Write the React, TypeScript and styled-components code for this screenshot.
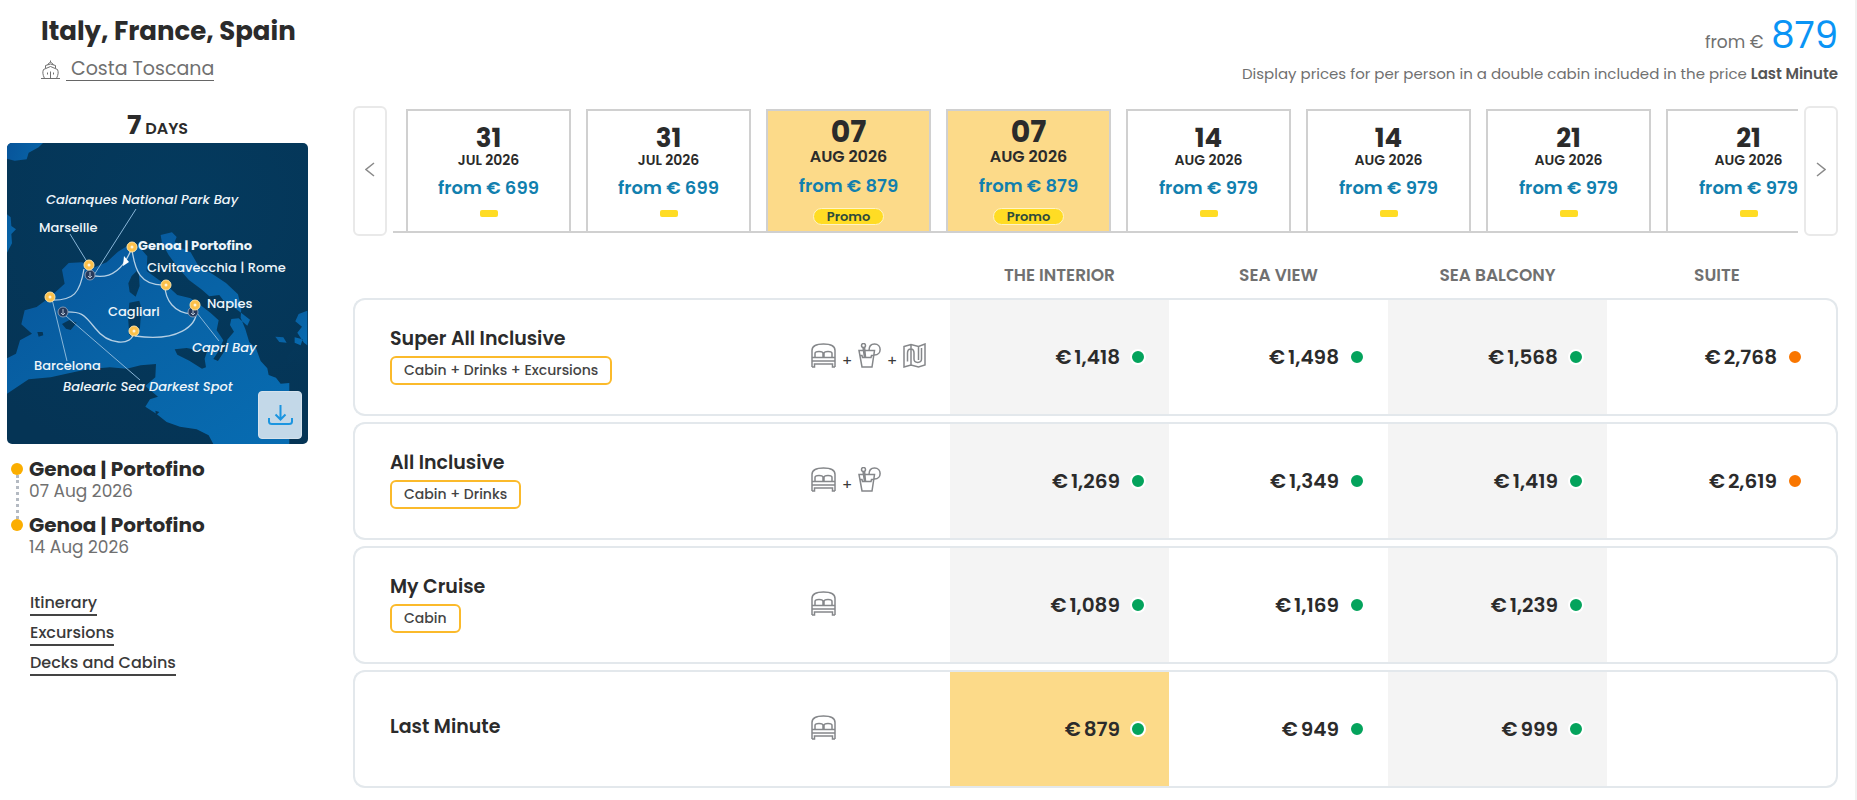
import React from 'react';
import styled, { createGlobalStyle } from 'styled-components';

const GlobalStyle = createGlobalStyle`
  * { box-sizing: border-box; }
  body { margin: 0; background: #fff; color: #2b2b2b; font-family: Poppins, Inter, "Open Sans", sans-serif; font-size: 16px; }
  h1, h2, p, ol, ul { margin: 0; padding: 0; }
  ol, ul { list-style: none; }
  button { font: inherit; color: inherit; cursor: pointer; }
`;

const Page = styled.main`
  min-height: 100vh;
  padding: 14px 17px 11px 7px;
  border-right: 2px solid #f1f1f1;
`;

const Header = styled.header`
  display: flex;
  justify-content: space-between;
  padding-left: 34px;
  height: 92px;
`;

const Title = styled.h1`
  font-size: 26px;
  line-height: 34px;
  font-weight: 700;
`;

const ShipLine = styled.p`
  display: flex;
  align-items: center;
  gap: 6px;
  margin-top: 10px;
  line-height: 26px;
  color: #666;
`;

const ShipLink = styled.a`
  padding-left: 5px;
  border-bottom: 1px solid #666;
  font-size: 19px;
  line-height: 22px;
  color: #707070;
  text-decoration: none;
`;

const PriceBlock = styled.div`
  text-align: right;
  color: #707070;
`;

const FromPrice = styled.p`
  font-size: 17px;
  line-height: 42px;
`;

const BigPrice = styled.span`
  margin-left: 3px;
  font-size: 37px;
  color: #0a94f5;
`;

const Note = styled.p`
  margin-top: 1px;
  font-size: 15px;
  line-height: 20px;
  strong { font-weight: 600; color: #555; }
`;

const Columns = styled.div`
  display: grid;
  grid-template-columns: 301px minmax(0, 1fr);
  column-gap: 45px;
`;

const Duration = styled.h2`
  font-size: 16px;
  line-height: 38px;
  height: 37px;
  font-weight: 600;
  text-align: center;
  span { font-size: 27px; font-weight: 700; }
`;

const MapBox = styled.div`
  position: relative;
  height: 301px;
  border-radius: 5px;
  overflow: hidden;
  svg { display: block; }
`;

const Download = styled.button`
  position: absolute;
  right: 6px;
  bottom: 5px;
  width: 44px;
  height: 48px;
  padding: 0 0 0 9px;
  border: 1px solid #d5e2ec;
  border-radius: 4px;
  background: #c3d8e8;
`;

const Stops = styled.ol`
  position: relative;
  margin: 12px 0 0 4px;
`;

const Stop = styled.li`
  position: relative;
  height: 56px;
  padding: 1px 0 0 18px;
  &::before {
    content: '';
    position: absolute;
    left: 0;
    top: 7px;
    width: 12px;
    height: 12px;
    border-radius: 50%;
    background: #fbae00;
  }
  &:first-child::after {
    content: '';
    position: absolute;
    left: 5px;
    top: 19px;
    height: 44px;
    border-left: 3px dotted #b4bac2;
  }
`;

const Port = styled.p`
  font-size: 20px;
  line-height: 24px;
  font-weight: 700;
`;

const PortDate = styled.p`
  font-size: 17px;
  line-height: 20px;
  color: #707070;
`;

const Links = styled.ul`
  display: flex;
  flex-direction: column;
  align-items: flex-start;
  gap: 6px;
  margin: 24px 0 0 23px;
`;

const TextLink = styled.a`
  display: block;
  border-bottom: 2px solid #444;
  font-size: 16px;
  line-height: 22px;
  font-weight: 500;
  color: #3a3a3a;
  text-decoration: none;
`;

const Dates = styled.div`
  display: flex;
  height: 130px;
`;

const Arrow = styled.button`
  flex: none;
  width: 34px;
  padding: 0 0 4px;
  border: 2px solid #e9e9e9;
  border-radius: 6px;
  background: #fff;
  color: #8a8a8a;
  svg { display: block; margin: auto; }
`;

const Track = styled.ul`
  flex: 1;
  display: flex;
  gap: 15px;
  margin: 3px 6px 3px 6px;
  padding-left: 13px;
  overflow: hidden;
  border-bottom: 2px solid #d0d0d0;
`;

const DateCard = styled.button<{ $active: boolean }>`
  display: flex;
  flex-direction: column;
  align-items: center;
  width: 165px;
  height: 122px;
  padding: ${p => (p.$active ? '6px' : '14px')} 0 0;
  border: 2px solid #d0d0d0;
  border-bottom: 0;
  background: ${p => (p.$active ? '#fcda89' : '#fff')};
`;

const Day = styled.span<{ $active: boolean }>`
  font-size: ${p => (p.$active ? 30 : 26)}px;
  line-height: ${p => (p.$active ? 30 : 26)}px;
  font-weight: 700;
`;

const Month = styled.span<{ $active: boolean }>`
  font-size: ${p => (p.$active ? 16 : 14)}px;
  line-height: ${p => (p.$active ? 20 : 18)}px;
  font-weight: 600;
`;

const Fare = styled.span`
  margin: 5px 0 8px;
  font-size: 18px;
  line-height: 28px;
  font-weight: 600;
  color: #117fae;
`;

const Promo = styled.span`
  padding: 0 13px;
  border: 1px solid #fff3c4;
  border-radius: 9px;
  background: #ffdc24;
  font-size: 13px;
  line-height: 15px;
  font-weight: 600;
  color: #2d4a3c;
`;

const Bar = styled.span`
  width: 18px;
  height: 7px;
  border-radius: 2px;
  background: #ffdc24;
`;

const Fares = styled.table`
  width: 100%;
  margin-top: 19px;
  table-layout: fixed;
  border-collapse: separate;
  border-spacing: 0 6px;
`;

const PriceCol = styled.col`
  width: 219px;
`;

const IconCol = styled.col`
  width: 139px;
`;

const LastCol = styled.col`
  width: 231px;
`;

const Heading = styled.th`
  height: 31px;
  padding: 0 0 4px;
  font-size: 17px;
  line-height: 24px;
  font-weight: 600;
  text-align: center;
  text-transform: uppercase;
  color: #707070;
  &:last-child { padding-right: 11px; }
`;

const Row = styled.tr`
  height: 118px;
  > * {
    padding: 0;
    border: solid #e3e8ec;
    border-width: 2px 0;
  }
  > :first-child { border-left-width: 2px; border-radius: 12px 0 0 12px; }
  > :last-child { border-right-width: 2px; border-radius: 0 12px 12px 0; padding-right: 40px; }
`;

const NameCell = styled.th`
  && { padding: 0 0 4px 35px; }
  text-align: left;
  font-weight: 600;
`;

const PackageName = styled.div`
  font-size: 19px;
  line-height: 28px;
`;

const Tag = styled.span`
  display: inline-block;
  margin: 3px 0 0;
  padding: 0 12px;
  border: 2px solid #fbba2b;
  border-radius: 6px;
  font-size: 14px;
  line-height: 25px;
  font-weight: 500;
  color: #444;
`;

const IconCell = styled.td`
  && { padding-bottom: 4px; }
`;

const Icons = styled.div`
  display: flex;
  align-items: center;
  gap: 6px;
  color: #85878a;
`;

const Plus = styled.span`
  padding-top: 12px;
  width: 10px;
  font-size: 15px;
  line-height: 20px;
  color: #3a3a3a;
`;

const PriceCell = styled.td<{ $tone: 'plain' | 'grey' | 'best' }>`
  background: ${p => ({ plain: '#fff', grey: '#f4f4f4', best: '#fcda89' })[p.$tone]};
  && { padding-right: 23px; }
  &&:last-child { padding-right: 33px; }
`;

const PriceLine = styled.div`
  display: flex;
  align-items: center;
  justify-content: flex-end;
  gap: 10px;
  font-size: 20px;
  line-height: 28px;
  font-weight: 600;
`;

const Amount = styled.span`
  display: flex;
  gap: 3px;
`;

const Dot = styled.span<{ $few: boolean }>`
  width: 16px;
  height: 16px;
  border: 2px solid #fff;
  border-radius: 50%;
  background: ${p => (p.$few ? '#f97600' : '#04a35c')};
`;

const ShipIcon = () => (
  <svg width="19" height="20" viewBox="0 0 19 20" fill="none" stroke="#707070" aria-hidden="true">
    <path d="M9.500.5v2M6.500 4.500 9.500 2l3 2.500M4.500 8V5.500l5-1.500 5 1.500V8M3.500 18.500C1.500 14 1.500 12 2.500 9.500l7-3 7 3c1 2.500 1 4.500-1 9M9.500 11.500v7M6.500 12.500v2M12.500 12.500v2M0 18.500h19" />
  </svg>
);

const BedIcon = () => (
  <svg width="25" height="25" viewBox="0 0 25 25" fill="none" stroke="currentColor" strokeWidth="1.500" aria-label="Cabin">
    <path d="M1 24V7.500C1 3 4.500 1 12.500 1S24 3 24 7.500V24M1 24h2.500v-3h18v3H24M1 14.500h23M1 18h23M4 14.500v-4C4 9 5 8.500 8 8.500s4 .5 4 2v4M13 14.500v-4c0-1.500 1-2 4-2s4 .5 4 2v4" />
  </svg>
);

const DrinkIcon = () => (
  <svg width="23" height="25" viewBox="0 0 23 25" fill="none" stroke="currentColor" strokeWidth="1.500" aria-label="Drinks">
    <path d="M1 7.500h15.500L14 24H4zM1.500 12.500H4l.5 2H13l.5-2H16M11 7.500C11 3.500 13 1 16.500 1c7.500 0 7.500 11 0 11M5 4.500l1.500 10M6.500 4l1 10" />
    <circle cx="5.500" cy="2.500" r="2" />
  </svg>
);

const MapIcon = () => (
  <svg width="23" height="25" viewBox="0 0 23 25" fill="none" stroke="currentColor" strokeWidth="1.500" aria-label="Excursions">
    <path d="M1 3.500l7-2 7.500 2L22 1V22l-6.500 2L8 22l-7 2zM8 1.500V22M15.500 3.500V17M4.500 18.500V10c0-5.500 6.500-5.500 6.500 0v6c0 4.500 7.500 4.500 7.500 0V5" />
  </svg>
);

const Chevron = ({ next }: { next?: boolean }) => (
  <svg width="10" height="15" viewBox="0 0 10 15" fill="none" stroke="currentColor" strokeWidth="1.500" aria-hidden="true">
    <path d={next ? 'M1 1l8 6.500-8 6.500' : 'M9 1L1 7.500l8 6.500'} />
  </svg>
);

const MapText = styled.text<{ $bold?: boolean }>`
  font-size: 13px;
  font-weight: ${p => (p.$bold ? 700 : 500)};
  fill: #eef5fa;
`;

const pins = [[125, 104], [82, 122], [43, 154], [159, 142], [188, 162], [127, 188]];
const anchors = [[83, 132], [56, 169], [186, 169]];
const labels: { x: number; y: number; t: string; i?: boolean; b?: boolean }[] = [
  { x: 39, y: 61, t: 'Calanques National Park Bay', i: true },
  { x: 32, y: 89, t: 'Marseille' },
  { x: 131, y: 107, t: 'Genoa | Portofino', b: true },
  { x: 140, y: 129, t: 'Civitavecchia | Rome' },
  { x: 200, y: 165, t: 'Naples' },
  { x: 101, y: 173, t: 'Cagliari' },
  { x: 185, y: 209, t: 'Capri Bay', i: true },
  { x: 27, y: 227, t: 'Barcelona' },
  { x: 56, y: 248, t: 'Balearic Sea Darkest Spot', i: true },
];

const RouteMap = () => (
  <svg width="301" height="301" viewBox="0 0 301 301" role="img" aria-label="Cruise route">
    <defs>
      <linearGradient id="sea" x1="0" y1="0" x2="1" y2="1">
        <stop offset="0" stopColor="#07549a" />
        <stop offset=".5" stopColor="#0863a6" />
        <stop offset="1" stopColor="#076cb2" />
      </linearGradient>
      <radialGradient id="land" cx=".6" cy=".2" r=".9">
        <stop offset="0" stopColor="#043a5e" />
        <stop offset="1" stopColor="#053455" />
      </radialGradient>
    </defs>
    <rect width="301" height="301" fill="url(#land)" />
    <g transform="translate(-7 -3) scale(.3333)">
      <path fill="url(#sea)" d="M20 8H130l-14 14-30 16-6 20-36 4-24-6zM20 222l12 10 2 26 14 10-14 14 2 28-16 30z" />
      <path
        fill="url(#sea)"
        d="M20 655l28-14 12-40 36-20-32-28 10-42 36-10 40-30 44-40-8-42 20-20 40-2 34 16 40-16 34-32 36-22 30 10 22 26-2 44 36 26 26 18 30 28 40 10 32 22 28 22 24 22-6 30 20 30-18 38-12 18 14 6 22-34 6-30 20-24-12-20 4-18 22-2 26 22 8-18-46-36-34-22-12-16-30 4-22-20-40-30-38-44-22-30-20-36-4-24 34-8 14 14-6 14 20 20 28 12 24 42 40 22 42 28 36 34 10 40-2 30 14 34 12 40 20 18 14 38 20 22 4 20 22 8 14 18 26-2V912H640l-14-26-36-18-50-8-40-14-30-24-34-22 14-22 24-8-38-32 30-26 2-40-46 4-42 10-50-4-68 6-56 12-54 12-66 6-66 44z"
      />
      <path fill="url(#sea)" d="M922 512l-26 10-10 22 20 16-14 18 20 30 10 8zM826 590l24 2 10 16-22-2zM884 592l24 6-6 18-18-8z" />
      <path fill="url(#land)" d="M411 392l6 12 2 34-12 32-18-14-4-26 10-22zM388 488l30-6 6 22-4 60-18 28-14-8-4-54zM524 628l36-4 32 6 32-4-10 30 4 26-12 4-38-24-36-18zM186 552l22-12 22 8-18 22-14-4zM112 576l16 0 2 10-14 4zM868 640l20-20 24 8 6 18-18 26-16-14-18 14-6-22zM466 812l12 4-10 10zM870 720l22 8-8 6z" />
    </g>
    <g stroke="#89b6d8" fill="none">
      <path d="M129 66 87 132M63 91l19 31M45 156l15 62M59 173l74 64M190 170l22 28" />
    </g>
    <g stroke="#b4cfe4" strokeWidth="1.300" fill="none">
      <path d="M125 107c3 20 8 36 33 35M158 142c0 15 9 28 27 29M189 163c4 21-20 36-61 30M127 189c-2 15-26 13-39-4-11-14-14-17-32-16M43 157c24 1 30-7 34-31M83 132c22 6 34-8 41-25" />
    </g>
    <path d="m117 113 5 6-6 4z" fill="#fff" />
    {anchors.map(([x, y]) => (
      <g key={x}>
        <circle cx={x} cy={y} r="5" fill="#26395b" stroke="#8399b4" />
        <path d={`M${x} ${y - 3}v5M${x - 2} ${y + 1}l2 2 2-2`} stroke="#b5c3d3" fill="none" />
      </g>
    ))}
    {pins.map(([x, y]) => (
      <g key={x}>
        <circle cx={x} cy={y} r="5" fill="#fcc14a" stroke="#fde3a6" />
        <circle cx={x} cy={y} r="1.500" fill="#fff3d6" />
      </g>
    ))}
    {labels.map(l => (
      <MapText key={l.t} x={l.x} y={l.y} fontStyle={l.i ? 'italic' : 'normal'} $bold={l.b}>
        {l.t}
      </MapText>
    ))}
  </svg>
);

const dates = [
  ['31', 'JUL 2026', '699'], ['31', 'JUL 2026', '699'],
  ['07', 'AUG 2026', '879'], ['07', 'AUG 2026', '879'],
  ['14', 'AUG 2026', '979'], ['14', 'AUG 2026', '979'],
  ['21', 'AUG 2026', '979'], ['21', 'AUG 2026', '979'],
];

const packages = [
  { name: 'Super All Inclusive', tag: 'Cabin + Drinks + Excursions', icons: [BedIcon, DrinkIcon, MapIcon], prices: ['1,418', '1,498', '1,568', '2,768'] },
  { name: 'All Inclusive', tag: 'Cabin + Drinks', icons: [BedIcon, DrinkIcon], prices: ['1,269', '1,349', '1,419', '2,619'] },
  { name: 'My Cruise', tag: 'Cabin', icons: [BedIcon], prices: ['1,089', '1,169', '1,239', ''] },
  { name: 'Last Minute', tag: '', icons: [BedIcon], prices: ['879', '949', '999', ''] },
];

export default function App() {
  return (
    <Page>
      <GlobalStyle />
      <Header>
        <div>
          <Title>Italy, France, Spain</Title>
          <ShipLine><ShipIcon /><ShipLink href="#ship">Costa Toscana</ShipLink></ShipLine>
        </div>
        <PriceBlock>
          <FromPrice>from € <BigPrice>879</BigPrice></FromPrice>
          <Note>Display prices for per person in a double cabin included in the price <strong>Last Minute</strong></Note>
        </PriceBlock>
      </Header>
      <Columns>
        <aside>
          <Duration><span>7</span> DAYS</Duration>
          <MapBox>
            <RouteMap />
            <Download aria-label="Download map">
              <svg width="25" height="22" viewBox="0 0 25 22" fill="none" stroke="#1b95e0" strokeWidth="2" aria-hidden="true">
                <path d="M12.500 1v14M7.500 10.500l5 5 5-5M1 14v3.500Q1 20 4 20h17q3 0 3-2.500V14" />
              </svg>
            </Download>
          </MapBox>
          <Stops>
            <Stop><Port>Genoa | Portofino</Port><PortDate>07 Aug 2026</PortDate></Stop>
            <Stop><Port>Genoa | Portofino</Port><PortDate>14 Aug 2026</PortDate></Stop>
          </Stops>
          <Links>
            {['Itinerary', 'Excursions', 'Decks and Cabins'].map(t => (
              <li key={t}><TextLink href="#details">{t}</TextLink></li>
            ))}
          </Links>
        </aside>
        <section>
          <Dates>
            <Arrow aria-label="Previous dates"><Chevron /></Arrow>
            <Track>
              {dates.map(([day, month, fare], i) => {
                const active = day === '07';
                return (
                  <li key={i}>
                    <DateCard $active={active}>
                      <Day $active={active}>{day}</Day>
                      <Month $active={active}>{month}</Month>
                      <Fare>from € {fare}</Fare>
                      {active ? <Promo>Promo</Promo> : <Bar />}
                    </DateCard>
                  </li>
                );
              })}
            </Track>
            <Arrow aria-label="Next dates"><Chevron next /></Arrow>
          </Dates>
          <Fares>
            <colgroup><col /><IconCol /><PriceCol /><PriceCol /><PriceCol /><LastCol /></colgroup>
            <thead>
              <tr>
                <td /><td />
                {['The interior', 'Sea view', 'Sea balcony', 'Suite'].map(h => <Heading key={h} scope="col">{h}</Heading>)}
              </tr>
            </thead>
            <tbody>
              {packages.map((p, r) => (
                <Row key={p.name}>
                  <NameCell scope="row">
                    <PackageName>{p.name}</PackageName>
                    {p.tag && <Tag>{p.tag}</Tag>}
                  </NameCell>
                  <IconCell>
                    <Icons>
                      {p.icons.map((Icon, i) => (
                        <React.Fragment key={i}>{i > 0 && <Plus>+</Plus>}<Icon /></React.Fragment>
                      ))}
                    </Icons>
                  </IconCell>
                  {p.prices.map((price, c) => (
                    <PriceCell key={c} $tone={r === 3 && c === 0 ? 'best' : c % 2 === 0 ? 'grey' : 'plain'}>
                      {price && (
                        <PriceLine>
                          <Amount><span>€</span><span>{price}</span></Amount>
                          <Dot $few={c === 3} />
                        </PriceLine>
                      )}
                    </PriceCell>
                  ))}
                </Row>
              ))}
            </tbody>
          </Fares>
        </section>
      </Columns>
    </Page>
  );
}
